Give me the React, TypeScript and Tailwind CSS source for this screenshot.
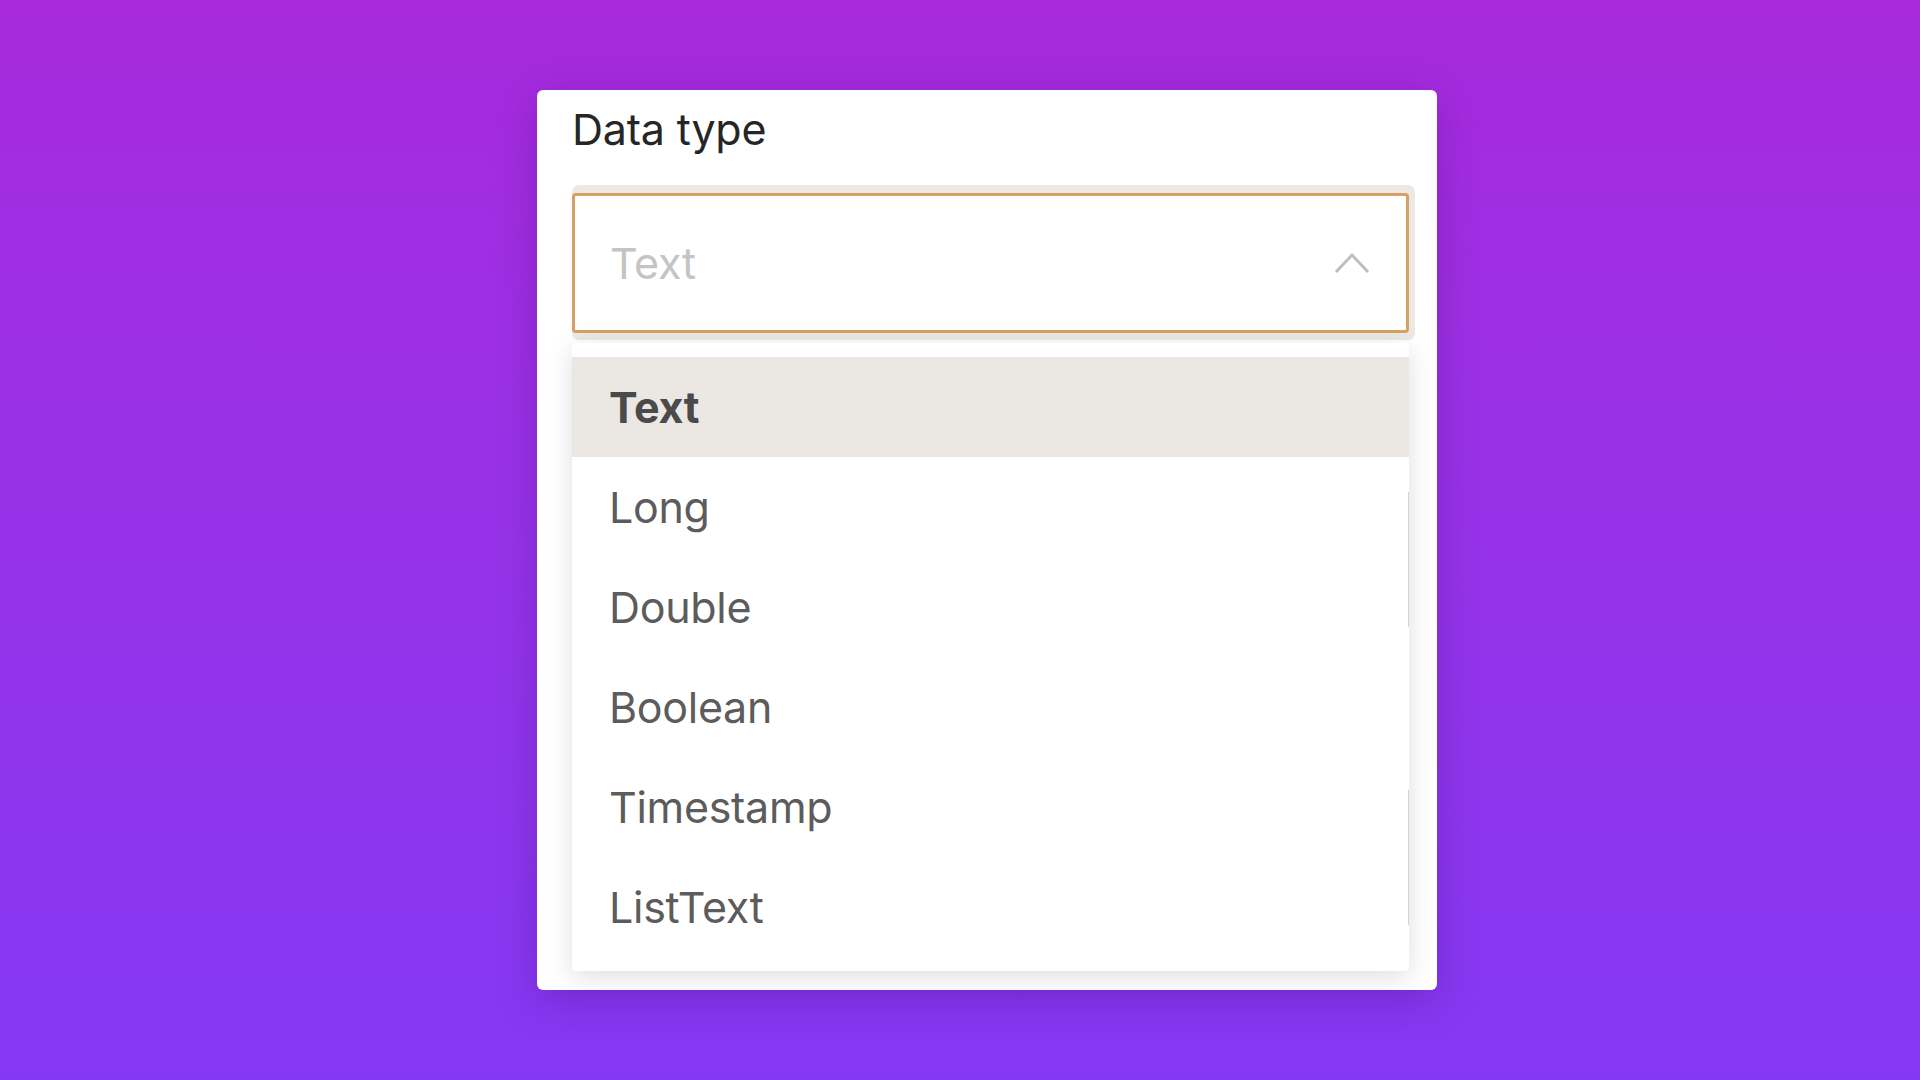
import React, { useState } from "react";

const options = ["Text", "Long", "Double", "Boolean", "Timestamp", "ListText"];

const ChevronUp = () => (
  <svg width="36" height="24" viewBox="0 0 36 24" fill="none" className="shrink-0">
    <polyline
      points="2,21 18,4 34,21"
      stroke="#bdbdbd"
      strokeWidth="2.8"
      strokeLinejoin="miter"
      fill="none"
    />
  </svg>
);

export default function App() {
  const [selected] = useState("Text");

  return (
    <div
      className="flex h-screen w-full items-center justify-center bg-gradient-to-b from-[#a729dd] to-[#8538f4]"
      style={{ fontFamily: "Inter, 'Liberation Sans', sans-serif" }}
    >
      <div className="ml-[54px] flex h-[900px] w-[900px] flex-col rounded-[6px] bg-white pt-[9px] pl-[35px] pr-[28px] shadow-[0_10px_40px_rgba(50,0,90,0.25)]">
        <p className="h-[60px] text-[43px] leading-[60px] tracking-[-0.2px] text-[#262626]">
          Data type
        </p>

        <div className="mt-[26px] -mr-[6px] rounded-[7px] bg-[#ece9e5] pt-[8px] pr-[6px] pb-[7px]">
          <div className="flex h-[140px] items-center justify-between rounded-[4px] border-[3px] border-[#d7a064] bg-white pl-[35px] pr-[36px]">
            <span className="text-[43px] tracking-[-0.3px] text-[#c4c4c4]">Text</span>
            <ChevronUp />
          </div>
        </div>

        <div className="relative mt-[3px] w-[837px] rounded-[4px] bg-white py-[14px] shadow-[0_6px_26px_rgba(0,0,0,0.13)]">
          <div className="absolute top-[149px] right-0 h-[135px] w-px bg-[#d4d4d4]" />
          <div className="absolute top-[447px] right-0 h-[135px] w-px bg-[#d4d4d4]" />
          {options.map((opt) => (
            <div
              key={opt}
              className={
                opt === selected
                  ? "flex h-[100px] items-center bg-[#ebe8e4] pl-[37px] text-[43px] font-bold tracking-[-0.3px] text-[#4a4a4a]"
                  : "flex h-[100px] items-center pl-[37px] text-[43px] tracking-[-0.3px] text-[#5c5c5c]"
              }
            >
              {opt}
            </div>
          ))}
        </div>
      </div>
    </div>
  );
}
